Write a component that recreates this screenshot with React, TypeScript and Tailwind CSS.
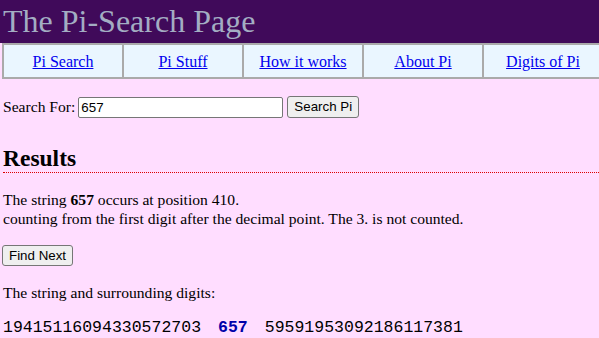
import React from 'react';

const links = ['Pi Search', 'Pi Stuff', 'How it works', 'About Pi', 'Digits of Pi'];

const App: React.FC = () => {
  return (
    <div className="min-h-[338px] bg-[#ffddff] text-black overflow-hidden font-['Liberation_Serif',serif] text-[16px]">
      <div className="h-[43px] bg-[#400a5a] pl-[3px] text-[32px] leading-[43px] text-[#a3adc3]">The Pi-Search Page</div>
      <div className="flex w-[602px] ml-[2px]">
        {links.map((l) => (
          <div key={l} className="w-[120px] h-[36px] shrink-0 flex items-center justify-center pt-[1px] bg-[#eaf6ff] border-2 border-r-0 border-[#aaaaaa]">
            <a href="#" className="text-[#0000ee] underline">{l}</a>
          </div>
        ))}
      </div>
      <div className="pl-[3px]">
        <form className="flex items-center mt-[17px] h-[22px] text-[15.6px]" onSubmit={(e) => e.preventDefault()}>
          <span>Search For:</span>
          <input
            defaultValue="657"
            className="ml-[3px] w-[205px] h-[21px] bg-white border border-[#767676] rounded-[2px] px-[2px] text-[13.33px] font-['Liberation_Sans',Arial,sans-serif]"
          />
          <button className="ml-[4px] h-[22px] px-[6px] bg-[#efefef] border border-[#767676] rounded-[3px] text-[13.33px] font-['Liberation_Sans',Arial,sans-serif]">Search Pi</button>
        </form>
        <h2 className="mt-[27px] text-[23.5px] font-bold leading-[26px] border-b border-dotted border-[#dd0000] pb-[1px]">Results</h2>
        <p className="mt-[17px] leading-[19px] text-[15.6px]">
          The string <b>657</b> occurs at position 410.<br />
          counting from the first digit after the decimal point. The 3. is not counted.
        </p>
        <button className="mt-[17px] ml-[-1px] h-[21px] px-[6px] bg-[#efefef] border border-[#767676] rounded-[3px] text-[13.33px] font-['Liberation_Sans',Arial,sans-serif]">Find Next</button>
        <p className="mt-[16px] leading-[19px] text-[15.6px]">The string and surrounding digits:</p>
        <p className="mt-[16px] leading-[19px] text-[16.5px] font-['Liberation_Mono',monospace] whitespace-pre">
          19415116094330572703<b className="px-[17px] text-[#0000aa]">657</b>59591953092186117381
        </p>
      </div>
    </div>
  );
};

export default App;
